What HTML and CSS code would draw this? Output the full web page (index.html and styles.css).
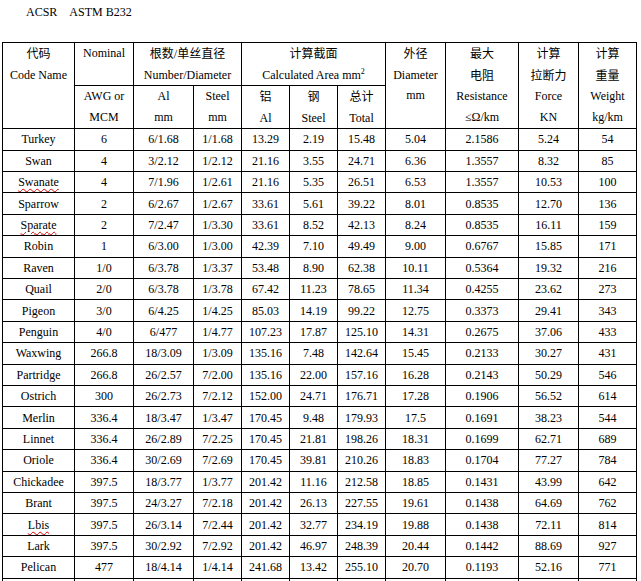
FILE: index.html
```html
<!DOCTYPE html>
<html>
<head>
<meta charset="utf-8">
<link rel="stylesheet" href="styles.css">
</head>
<body>
<div class="title">ACSR&nbsp;&nbsp;&nbsp;&nbsp;ASTM B232</div>
<table class="spec">
<colgroup>
<col class="c72"><col class="c59"><col class="c60"><col class="c48"><col class="c48"><col class="c48"><col class="c48"><col class="c60"><col class="c73"><col class="c60"><col class="c58">
</colgroup>
<thead>
<tr class="h1">
<th rowspan="2"><span class="cn">代码</span><br>Code Name</th>
<th>Nominal</th>
<th colspan="2"><span class="cn">根数</span>/<span class="cn">单丝直径</span><br>Number/Diameter</th>
<th colspan="3"><span class="cn">计算截面</span><br>Calculated Area mm<sup>2</sup></th>
<th rowspan="2"><span class="cn">外径</span><br>Diameter<br>mm</th>
<th rowspan="2"><span class="cn">最大</span><br><span class="cn">电阻</span><br>Resistance<br>≤Ω/km</th>
<th rowspan="2"><span class="cn">计算</span><br><span class="cn">拉断力</span><br>Force<br>KN</th>
<th rowspan="2"><span class="cn">计算</span><br><span class="cn">重量</span><br>Weight<br>kg/km</th>
</tr>
<tr class="h2">
<th>AWG or<br>MCM</th>
<th>Al<br>mm</th>
<th>Steel<br>mm</th>
<th><span class="cn">铝</span><br>Al</th>
<th><span class="cn">钢</span><br>Steel</th>
<th><span class="cn">总计</span><br>Total</th>
</tr>
</thead>
<tbody>
<tr><td>Turkey</td><td>6</td><td>6/1.68</td><td>1/1.68</td><td>13.29</td><td>2.19</td><td>15.48</td><td>5.04</td><td>2.1586</td><td>5.24</td><td>54</td></tr>
<tr><td>Swan</td><td>4</td><td>3/2.12</td><td>1/2.12</td><td>21.16</td><td>3.55</td><td>24.71</td><td>6.36</td><td>1.3557</td><td>8.32</td><td>85</td></tr>
<tr><td><span class="sp">Swanate</span></td><td>4</td><td>7/1.96</td><td>1/2.61</td><td>21.16</td><td>5.35</td><td>26.51</td><td>6.53</td><td>1.3557</td><td>10.53</td><td>100</td></tr>
<tr><td>Sparrow</td><td>2</td><td>6/2.67</td><td>1/2.67</td><td>33.61</td><td>5.61</td><td>39.22</td><td>8.01</td><td>0.8535</td><td>12.70</td><td>136</td></tr>
<tr><td><span class="sp">Sparate</span></td><td>2</td><td>7/2.47</td><td>1/3.30</td><td>33.61</td><td>8.52</td><td>42.13</td><td>8.24</td><td>0.8535</td><td>16.11</td><td>159</td></tr>
<tr><td>Robin</td><td>1</td><td>6/3.00</td><td>1/3.00</td><td>42.39</td><td>7.10</td><td>49.49</td><td>9.00</td><td>0.6767</td><td>15.85</td><td>171</td></tr>
<tr><td>Raven</td><td>1/0</td><td>6/3.78</td><td>1/3.37</td><td>53.48</td><td>8.90</td><td>62.38</td><td>10.11</td><td>0.5364</td><td>19.32</td><td>216</td></tr>
<tr><td>Quail</td><td>2/0</td><td>6/3.78</td><td>1/3.78</td><td>67.42</td><td>11.23</td><td>78.65</td><td>11.34</td><td>0.4255</td><td>23.62</td><td>273</td></tr>
<tr><td>Pigeon</td><td>3/0</td><td>6/4.25</td><td>1/4.25</td><td>85.03</td><td>14.19</td><td>99.22</td><td>12.75</td><td>0.3373</td><td>29.41</td><td>343</td></tr>
<tr><td>Penguin</td><td>4/0</td><td>6/477</td><td>1/4.77</td><td>107.23</td><td>17.87</td><td>125.10</td><td>14.31</td><td>0.2675</td><td>37.06</td><td>433</td></tr>
<tr><td>Waxwing</td><td>266.8</td><td>18/3.09</td><td>1/3.09</td><td>135.16</td><td>7.48</td><td>142.64</td><td>15.45</td><td>0.2133</td><td>30.27</td><td>431</td></tr>
<tr><td>Partridge</td><td>266.8</td><td>26/2.57</td><td>7/2.00</td><td>135.16</td><td>22.00</td><td>157.16</td><td>16.28</td><td>0.2143</td><td>50.29</td><td>546</td></tr>
<tr><td>Ostrich</td><td>300</td><td>26/2.73</td><td>7/2.12</td><td>152.00</td><td>24.71</td><td>176.71</td><td>17.28</td><td>0.1906</td><td>56.52</td><td>614</td></tr>
<tr><td>Merlin</td><td>336.4</td><td>18/3.47</td><td>1/3.47</td><td>170.45</td><td>9.48</td><td>179.93</td><td>17.5</td><td>0.1691</td><td>38.23</td><td>544</td></tr>
<tr><td>Linnet</td><td>336.4</td><td>26/2.89</td><td>7/2.25</td><td>170.45</td><td>21.81</td><td>198.26</td><td>18.31</td><td>0.1699</td><td>62.71</td><td>689</td></tr>
<tr><td>Oriole</td><td>336.4</td><td>30/2.69</td><td>7/2.69</td><td>170.45</td><td>39.81</td><td>210.26</td><td>18.83</td><td>0.1704</td><td>77.27</td><td>784</td></tr>
<tr><td>Chickadee</td><td>397.5</td><td>18/3.77</td><td>1/3.77</td><td>201.42</td><td>11.16</td><td>212.58</td><td>18.85</td><td>0.1431</td><td>43.99</td><td>642</td></tr>
<tr><td>Brant</td><td>397.5</td><td>24/3.27</td><td>7/2.18</td><td>201.42</td><td>26.13</td><td>227.55</td><td>19.61</td><td>0.1438</td><td>64.69</td><td>762</td></tr>
<tr><td><span class="sp">Lbis</span></td><td>397.5</td><td>26/3.14</td><td>7/2.44</td><td>201.42</td><td>32.77</td><td>234.19</td><td>19.88</td><td>0.1438</td><td>72.11</td><td>814</td></tr>
<tr><td>Lark</td><td>397.5</td><td>30/2.92</td><td>7/2.92</td><td>201.42</td><td>46.97</td><td>248.39</td><td>20.44</td><td>0.1442</td><td>88.69</td><td>927</td></tr>
<tr><td>Pelican</td><td>477</td><td>18/4.14</td><td>1/4.14</td><td>241.68</td><td>13.42</td><td>255.10</td><td>20.70</td><td>0.1193</td><td>52.16</td><td>771</td></tr>
<tr class="blank"><td></td><td></td><td></td><td></td><td></td><td></td><td></td><td></td><td></td><td></td><td></td></tr>
</tbody>
</table>
</body>
</html>
```
FILE: styles.css
```css
html, body {
  margin: 0;
  padding: 0;
  background: #fff;
  overflow: hidden;
}
body {
  font-family: "Liberation Serif", "Noto Sans CJK SC", serif;
  font-size: 12px;
  color: #000;
}
.title {
  height: 42px;
  box-sizing: border-box;
  padding: 5px 0 0 26px;
  line-height: 14px;
}
.spec {
  border-collapse: collapse;
  table-layout: fixed;
  width: 635px;
  margin-left: 2px;
  font-family: "Liberation Serif", "Noto Sans CJK SC", serif;
  font-size: 12px;
}
.c72 { width: 72px; }
.c59 { width: 59px; }
.c60 { width: 60px; }
.c48 { width: 48px; }
.c73 { width: 73px; }
.c58 { width: 58px; }
.spec th, .spec td {
  border: 1px solid #000;
  padding: 0;
  text-align: center;
  font-family: "Liberation Serif", "Noto Sans CJK SC", serif;
  font-weight: normal;
  white-space: nowrap;
  overflow: hidden;
}
.spec th {
  vertical-align: top;
  line-height: 20.5px;
}
.h1 { height: 42px; }
.h2 { height: 43.3px; }
.spec tbody tr { height: 21.4px; }
.spec tbody tr.blank { height: 21.4px; }
.spec td {
  vertical-align: middle;
  line-height: 14px;
}
.spec .cn {
  font-family: "Noto Sans CJK SC", sans-serif;
  font-size: 12px;
}
sup {
  font-size: 8px;
  line-height: 0;
  vertical-align: 5px;
}
.sp {
  text-decoration: underline wavy #d40000;
  text-decoration-thickness: 1px;
  text-underline-offset: 2px;
}
```
